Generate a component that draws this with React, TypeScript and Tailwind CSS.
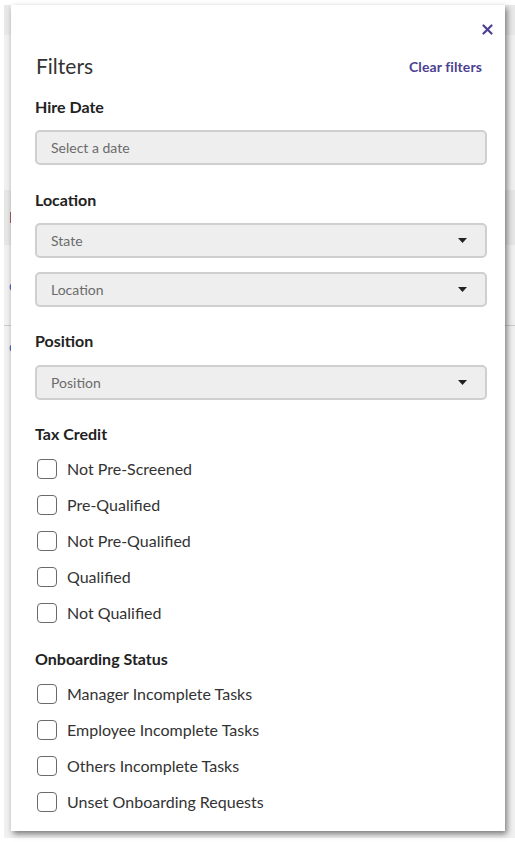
import React from "react";

const font = { fontFamily: "Lato, 'Noto Sans', sans-serif" };

function Caret() {
  return (
    <svg width="9" height="5" viewBox="0 0 9 5" className="shrink-0">
      <path d="M0 0 L9 0 L4.5 5 Z" fill="#222" />
    </svg>
  );
}

function Field({ placeholder, select }: { placeholder: string; select?: boolean }) {
  return (
    <div className="h-[35px] w-full rounded-[5px] border-2 border-[#cfcfcf] bg-[#eeeeee] flex items-center pl-[14px] pr-[18px] justify-between">
      <span className="text-[14px] text-[#6b6b6b]">{placeholder}</span>
      {select && <Caret />}
    </div>
  );
}

function Check({ label }: { label: string }) {
  return (
    <div className="h-[36px] flex items-center pl-[2px]">
      <div className="w-[20px] h-[20px] rounded-[4px] border border-[#6a6a6a] bg-white shrink-0" />
      <span className="ml-[10px] text-[16px] text-[#333333]">{label}</span>
    </div>
  );
}

function Label({ children }: { children: React.ReactNode }) {
  return <div className="h-5 leading-5 text-[16px] font-bold text-[#222222]">{children}</div>;
}

export default function App() {
  return (
    <div className="relative w-[515px] h-[842px] bg-white overflow-hidden" style={font}>
      {/* background page */}
      <div className="ml-[4px] mt-[5px] h-[833px] bg-[#f1f1f1] flex flex-col">
        <div className="h-[30px] bg-[#e9e9e9]" />
        <div className="h-[155px]" />
        <div className="h-[55px] bg-[#e7e7e7] flex items-center pl-[5px] text-[15px] text-[#1c1c5c]">Items</div>
        <div className="h-[80px] flex items-center pl-[5px] text-[15px] text-[#2a6ad0]">cell</div>
        <div className="h-[1px] bg-[#cccccc]" />
        <div className="h-[40px] flex items-center pl-[5px] text-[15px] text-[#2a6ad0]">cell</div>
      </div>

      {/* drawer panel */}
      <div className="absolute left-[11px] top-[5px] w-[494px] h-[826px] bg-white shadow-[2px_3px_6px_rgba(0,0,0,0.5)] flex flex-col pl-[24px] pr-[18px] pt-[14px]">
        <div className="h-5 flex items-center justify-end mr-[-6px]">
          <svg width="11" height="11" viewBox="0 0 11 11">
            <path d="M1.5 1.5 L9.5 9.5 M9.5 1.5 L1.5 9.5" stroke="#4d3f91" strokeWidth="2.2" strokeLinecap="round" />
          </svg>
        </div>
        <div className="mt-[13px] h-[28px] flex items-center justify-between pr-[5px]">
          <span className="text-[21px] text-[#333333] pl-[1px]">Filters</span>
          <span className="text-[14px] font-bold text-[#4d3f91] tracking-[0.1px]">Clear filters</span>
        </div>

        <div className="mt-[17px] flex flex-col">
          <Label>Hire Date</Label>
          <div className="mt-[13px]">
            <Field placeholder="Select a date" />
          </div>
        </div>

        <div className="mt-[25px] flex flex-col">
          <Label>Location</Label>
          <div className="mt-[13px] flex flex-col gap-[14px]">
            <Field placeholder="State" select />
            <Field placeholder="Location" select />
          </div>
        </div>

        <div className="mt-[24px] flex flex-col">
          <Label>Position</Label>
          <div className="mt-[14px]">
            <Field placeholder="Position" select />
          </div>
        </div>

        <div className="mt-[24px] flex flex-col">
          <Label>Tax Credit</Label>
          <div className="mt-[7px] flex flex-col">
            <Check label="Not Pre-Screened" />
            <Check label="Pre-Qualified" />
            <Check label="Not Pre-Qualified" />
            <Check label="Qualified" />
            <Check label="Not Qualified" />
          </div>
        </div>

        <div className="mt-[18px] flex flex-col">
          <Label>Onboarding Status</Label>
          <div className="mt-[7px] flex flex-col">
            <Check label="Manager Incomplete Tasks" />
            <Check label="Employee Incomplete Tasks" />
            <Check label="Others Incomplete Tasks" />
            <Check label="Unset Onboarding Requests" />
          </div>
        </div>
      </div>
    </div>
  );
}
